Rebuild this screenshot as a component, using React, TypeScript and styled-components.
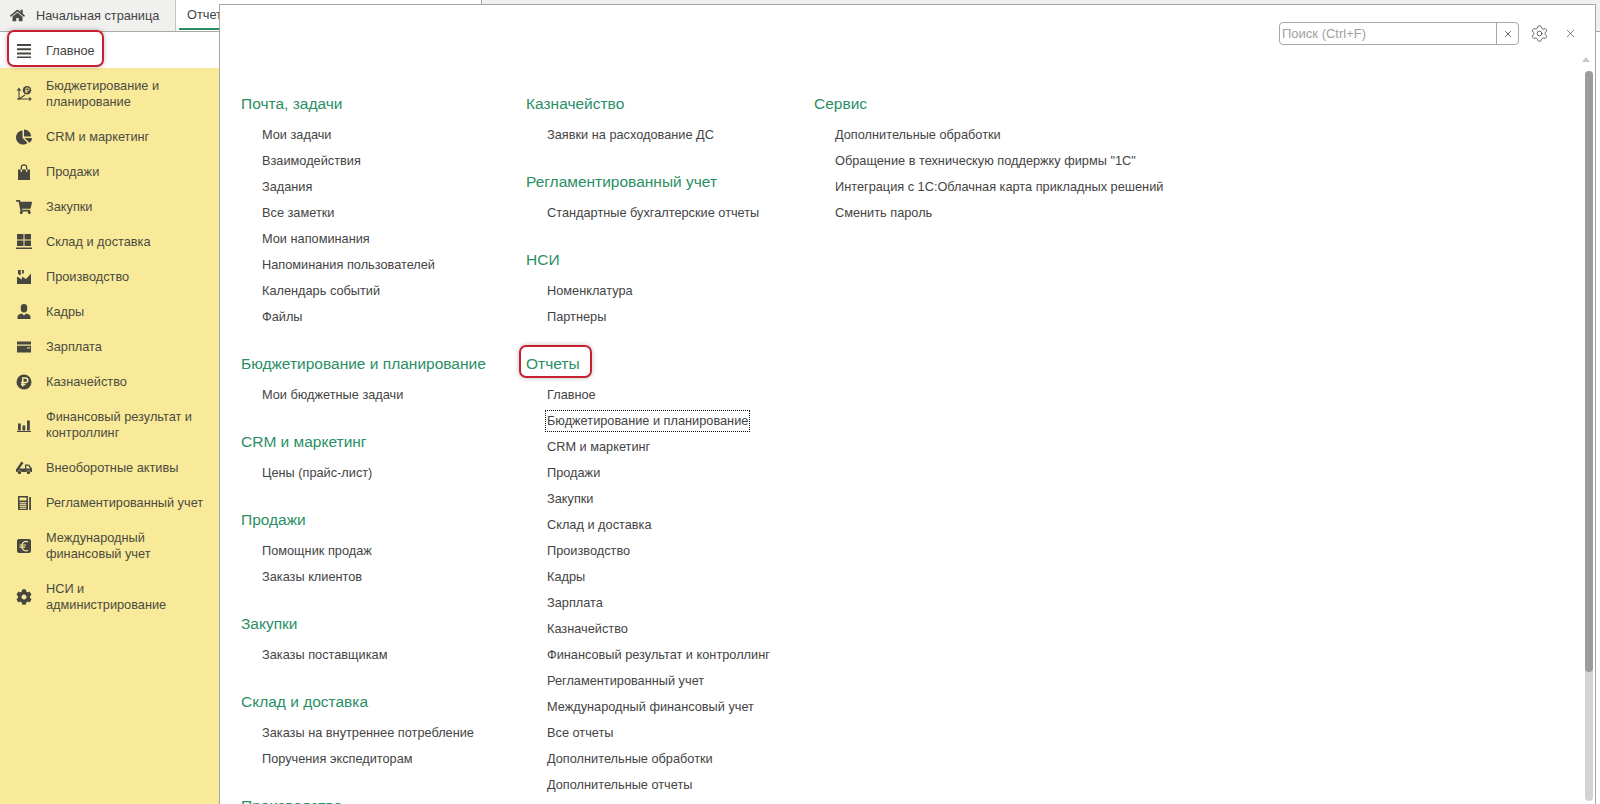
import React from 'react';
import styled, { createGlobalStyle } from 'styled-components';
import { Settings, X } from 'lucide-react';
import { FaChartPie, FaCog, FaHome, FaShoppingCart } from 'react-icons/fa';

const GlobalStyle = createGlobalStyle`
  html, body {
    margin: 0;
    height: 100%;
    overflow: hidden;
    background: #fff;
  }
  body {
    font-family: "Liberation Sans", Arial, sans-serif;
    font-size: 12.75px;
  }
`;

const Page = styled.div`
  position: relative;
  display: flex;
  flex-direction: column;
  height: 100vh;
  overflow: hidden;
`;

const TopBar = styled.div`
  display: flex;
  height: 31px;
  flex: none;
  border-bottom: 1px solid #a9a9a5;
  background: #f0f0ee;
`;

const HomeTab = styled.div`
  display: flex;
  align-items: center;
  gap: 11px;
  width: 176px;
  padding-left: 10px;
  box-sizing: border-box;
  border-right: 1px solid #c4c4c0;
  color: #444;
  svg {
    width: 15px;
    height: 15px;
    color: #4a4a46;
  }
`;

const ReportTab = styled.div`
  position: relative;
  width: 306px;
  box-sizing: border-box;
  padding: 7px 0 0 11px;
  border-right: 1px solid #a9a9a5;
  background: #fff;
  color: #444;
  &::after {
    content: '';
    position: absolute;
    left: 3px;
    bottom: 1px;
    width: 80px;
    height: 2px;
    background: #2a8f65;
  }
`;

const Body = styled.div`
  display: flex;
  flex: 1;
  min-height: 0;
`;

const Sidebar = styled.nav`
  display: flex;
  flex-direction: column;
  width: 219px;
  flex: none;
`;

const MainRow = styled.div`
  position: relative;
  display: flex;
  align-items: center;
  height: 36px;
  flex: none;
  padding-left: 16px;
  gap: 14px;
  color: #444;
  background: #fff;
`;

const Highlight = styled.span`
  position: absolute;
  left: 7px;
  top: -2px;
  width: 97px;
  height: 37px;
  box-sizing: border-box;
  border: 2px solid #c9202f;
  border-radius: 7px;
  box-shadow: 0 0 5px rgba(0, 0, 0, 0.28);
`;

const NavList = styled.div`
  flex: 1;
  padding-top: 1px;
  background: #f9ea9a;
`;

const NavRow = styled.div`
  display: flex;
  align-items: center;
  gap: 14px;
  padding: 9px 0 10px 16px;
  line-height: 16px;
  color: #4a4a3e;
`;

const NavIcon = styled.span`
  display: flex;
  align-items: center;
  justify-content: center;
  width: 16px;
  height: 16px;
  flex: none;
  color: #47473f;
  svg {
    display: block;
    width: 16px;
    height: 16px;
  }
`;

const Panel = styled.section`
  position: absolute;
  left: 219px;
  top: 4px;
  right: 4px;
  bottom: -1px;
  box-sizing: border-box;
  border: 1px solid #a6a6a2;
  background: #fff;
  overflow: hidden;
`;

const PanelHead = styled.header`
  display: flex;
  align-items: center;
  justify-content: flex-end;
  height: 23px;
  margin: 17px 0 49px;
  padding-right: 18px;
`;

const SearchBox = styled.div`
  display: flex;
  width: 240px;
  height: 23px;
  box-sizing: border-box;
  border: 1px solid #a8a8a8;
  border-radius: 4px;
`;

const SearchInput = styled.input`
  flex: 1;
  min-width: 0;
  border: 0;
  outline: 0;
  padding: 0 2px;
  background: transparent;
  font: 13px "Liberation Sans", Arial, sans-serif;
  color: #444;
  &::placeholder {
    color: #a0a0a0;
    opacity: 1;
  }
`;

const SearchClear = styled.span`
  display: flex;
  align-items: center;
  justify-content: center;
  width: 21px;
  border-left: 1px solid #a8a8a8;
  color: #444;
`;

const HeadButton = styled.span<{ $gap: number }>`
  display: flex;
  align-items: center;
  justify-content: center;
  color: #444;
  margin-left: ${({ $gap }) => $gap}px;
`;

const Columns = styled.div`
  display: grid;
  grid-template-columns: 285px 288px 1fr;
  padding-left: 21px;
`;

const Column = styled.div`
  display: flex;
  flex-direction: column;
  gap: 24px;
`;

const Group = styled.div``;

const GroupTitle = styled.h3<{ $marked?: boolean }>`
  position: relative;
  margin: 0 0 8px;
  font-size: 15.5px;
  font-weight: 400;
  line-height: 20px;
  color: #2a8f65;
  ${({ $marked }) =>
    $marked &&
    `&::after {
      content: '';
      position: absolute;
      left: -7px;
      top: -9px;
      width: 73px;
      height: 33px;
      box-sizing: border-box;
      border: 2px solid #c9202f;
      border-radius: 7px;
      box-shadow: 0 0 5px rgba(0, 0, 0, 0.25);
    }`}
`;

const Item = styled.div`
  display: flex;
  align-items: center;
  height: 26px;
  padding-left: 21px;
  color: #444;
`;

const ItemLabel = styled.span<{ $focused?: boolean }>`
  line-height: 18px;
  white-space: nowrap;
  ${({ $focused }) => $focused && 'outline: 1px dotted #111; outline-offset: 1px;'}
`;

const ScrollArrow = styled.span`
  position: absolute;
  right: 5px;
  top: 52px;
  width: 0;
  height: 0;
  border: 4px solid transparent;
  border-top: 0;
  border-bottom: 5px solid #c9c9c9;
`;

const ScrollTrack = styled.div`
  position: absolute;
  right: 2px;
  top: 66px;
  bottom: 3px;
  width: 8px;
  border-radius: 4px;
  background: #d3d3d3;
`;

const ScrollThumb = styled.div`
  height: 601px;
  border-radius: 4px;
  background: #9c9c9c;
`;

const Budget = () => (
  <svg viewBox="0 0 16 16">
    <path d="M3 3v11M1 13h14M1.400 4.600 3 2.400l1.600 2.200M13.200 11.400 15 13l-1.800 1.600M3 13l6-4" fill="none" stroke="currentColor" strokeWidth="1.100" />
    <circle cx="11" cy="4.200" r="4.200" fill="currentColor" />
    <path d="M10 7V2h1.800a1.300 1.300 0 0 1 0 2.800H9.200M9.200 6h2.600" fill="none" stroke="#f9ea9a" strokeWidth="0.900" />
  </svg>
);

const Bag = () => (
  <svg viewBox="0 0 16 16">
    <path d="M2 5.500h12V16H2z" fill="currentColor" />
    <path d="M5.300 8V3.500a2.700 2.700 0 0 1 5.400 0V8" fill="none" stroke="currentColor" strokeWidth="1.300" />
    <path d="M5.300 5.500V8M10.700 5.500V8" stroke="#f9ea9a" strokeWidth="1.300" />
  </svg>
);

const Warehouse = () => (
  <svg viewBox="0 0 16 16" fill="currentColor">
    <path d="M1 0h6.500v5.500H1zM8.500 0H15v5.500H8.500zM1 6.500h6.500V12H1zM8.500 6.500H15V12H8.500zM0 13.500h16V15H0z" />
  </svg>
);

const Factory = () => (
  <svg viewBox="0 0 16 16" fill="currentColor">
    <path d="M1 15V7.500l5 3V7.500l4 2.500 5-5.500V15zM2 1h2.800v5.500L2 5zM6 1h1.800v3.500H6z" />
  </svg>
);

const Person = () => (
  <svg viewBox="0 0 16 16" fill="currentColor">
    <path d="M4.800 3.200a3.200 3.200 0 0 1 6.400 0v2a3.200 3.200 0 0 1-6.400 0zM1.500 15v-2c0-2.200 2.300-3 4.500-3.500L8 11.500l2-2c2.200.5 4.500 1.300 4.500 3.500v2z" />
  </svg>
);

const Card = () => (
  <svg viewBox="0 0 16 16" fill="currentColor">
    <path d="M1 2.500h14v3H1zM1 6.800h14v6.700H1z" />
    <path d="M11 8.500h3v1h-3z" fill="#f9ea9a" />
  </svg>
);

const Ruble = () => (
  <svg viewBox="0 0 16 16">
    <circle cx="8" cy="8" r="7.500" fill="currentColor" />
    <path d="M6.800 12.500V4h2.700a2.300 2.300 0 0 1 0 4.600H5M5 10.500h4.500" fill="none" stroke="#f9ea9a" strokeWidth="1.500" />
  </svg>
);

const Bars = () => (
  <svg viewBox="0 0 16 16" fill="currentColor">
    <path d="M2 6.500h2.800v7H2zM6.500 8.500h2.800v5H6.500zM11 3.500h2.800v10H11zM1 14h14v1H1z" />
  </svg>
);

const Truck = () => (
  <svg viewBox="0 0 16 16" fill="currentColor">
    <path d="M0 9.500 5.500 1.500l2 1.400L3.500 8.500h5.500V4.500h4l3 4V12h-1.300a2.400 2.400 0 0 0-4.400 0H5.700a2.400 2.400 0 0 0-4.400 0H0zM10.300 5.800v2.700h3.800l-1.800-2.700z" fillRule="evenodd" />
    <circle cx="3.500" cy="12.500" r="1.700" />
    <circle cx="12.500" cy="12.500" r="1.700" />
  </svg>
);

const Calculator = () => (
  <svg viewBox="0 0 16 16">
    <path d="M2 1h10v14H2z" fill="currentColor" />
    <path d="M3.500 2.500h7v3h-7z" fill="#f9ea9a" />
    <path d="M3.500 7.500h7M3.500 9.500h7M3.500 11.500h7M3.500 13.500h7M5 7v7M7 7v7M9 7v7" stroke="#f9ea9a" strokeWidth="0.700" fill="none" />
    <path d="M13.200 2H15v13h-1.800z" fill="currentColor" />
  </svg>
);

const Euro = () => (
  <svg viewBox="0 0 16 16">
    <rect x="1" y="1" width="14" height="14" rx="2" fill="currentColor" />
    <path d="M12 4a4 4 0 0 0-6 3.800V8.500A4 4 0 0 0 12 12.200M3.500 7h6.500M3.500 9.200h5.500" fill="none" stroke="#f9ea9a" strokeWidth="1.200" />
  </svg>
);

const MenuBars = () => (
  <svg viewBox="0 0 16 16" fill="currentColor">
    <path d="M1 2h14v2H1zM1 6.300h14v2H1zM1 10.500h14v2H1zM1 14.500h14v2H1z" />
  </svg>
);

const navItems: { icon: React.ReactNode; label: React.ReactNode }[] = [
  { icon: <Budget />, label: <>Бюджетирование и<br />планирование</> },
  { icon: <FaChartPie />, label: 'CRM и маркетинг' },
  { icon: <Bag />, label: 'Продажи' },
  { icon: <FaShoppingCart />, label: 'Закупки' },
  { icon: <Warehouse />, label: 'Склад и доставка' },
  { icon: <Factory />, label: 'Производство' },
  { icon: <Person />, label: 'Кадры' },
  { icon: <Card />, label: 'Зарплата' },
  { icon: <Ruble />, label: 'Казначейство' },
  { icon: <Bars />, label: <>Финансовый результат и<br />контроллинг</> },
  { icon: <Truck />, label: 'Внеоборотные активы' },
  { icon: <Calculator />, label: 'Регламентированный учет' },
  { icon: <Euro />, label: <>Международный<br />финансовый учет</> },
  { icon: <FaCog />, label: <>НСИ и<br />администрирование</> },
];

interface IGroup {
  title: string;
  items: string[];
}

const columns: IGroup[][] = [
  [
    {
      title: 'Почта, задачи',
      items: ['Мои задачи', 'Взаимодействия', 'Задания', 'Все заметки', 'Мои напоминания', 'Напоминания пользователей', 'Календарь событий', 'Файлы'],
    },
    { title: 'Бюджетирование и планирование', items: ['Мои бюджетные задачи'] },
    { title: 'CRM и маркетинг', items: ['Цены (прайс-лист)'] },
    { title: 'Продажи', items: ['Помощник продаж', 'Заказы клиентов'] },
    { title: 'Закупки', items: ['Заказы поставщикам'] },
    { title: 'Склад и доставка', items: ['Заказы на внутреннее потребление', 'Поручения экспедиторам'] },
    { title: 'Производство', items: [] },
  ],
  [
    { title: 'Казначейство', items: ['Заявки на расходование ДС'] },
    { title: 'Регламентированный учет', items: ['Стандартные бухгалтерские отчеты'] },
    { title: 'НСИ', items: ['Номенклатура', 'Партнеры'] },
    {
      title: 'Отчеты',
      items: [
        'Главное',
        'Бюджетирование и планирование',
        'CRM и маркетинг',
        'Продажи',
        'Закупки',
        'Склад и доставка',
        'Производство',
        'Кадры',
        'Зарплата',
        'Казначейство',
        'Финансовый результат и контроллинг',
        'Регламентированный учет',
        'Международный финансовый учет',
        'Все отчеты',
        'Дополнительные обработки',
        'Дополнительные отчеты',
      ],
    },
  ],
  [
    {
      title: 'Сервис',
      items: ['Дополнительные обработки', 'Обращение в техническую поддержку фирмы "1С"', 'Интеграция с 1С:Облачная карта прикладных решений', 'Сменить пароль'],
    },
  ],
];

export default function App(): JSX.Element {
  return (
    <Page>
      <GlobalStyle />
      <TopBar>
        <HomeTab>
          <FaHome />
          Начальная страница
        </HomeTab>
        <ReportTab>Отчеты</ReportTab>
      </TopBar>
      <Body>
        <Sidebar>
          <MainRow>
            <NavIcon>
              <MenuBars />
            </NavIcon>
            Главное
            <Highlight />
          </MainRow>
          <NavList>
            {navItems.map((item, i) => (
              <NavRow key={i}>
                <NavIcon>{item.icon}</NavIcon>
                <span>{item.label}</span>
              </NavRow>
            ))}
          </NavList>
        </Sidebar>
      </Body>
      <Panel>
        <PanelHead>
          <SearchBox>
            <SearchInput placeholder="Поиск (Ctrl+F)" readOnly />
            <SearchClear>
              <X size={10} strokeWidth={2} />
            </SearchClear>
          </SearchBox>
          <HeadButton $gap={11}>
            <Settings size={19} strokeWidth={1} />
          </HeadButton>
          <HeadButton $gap={15}>
            <X size={13} strokeWidth={1.200} />
          </HeadButton>
        </PanelHead>
        <Columns>
          {columns.map((groups, c) => (
            <Column key={c}>
              {groups.map((group) => (
                <Group key={group.title}>
                  <GroupTitle $marked={group.title === 'Отчеты'}>{group.title}</GroupTitle>
                  {group.items.map((item) => (
                    <Item key={item}>
                      <ItemLabel $focused={group.title === 'Отчеты' && item === 'Бюджетирование и планирование'}>{item}</ItemLabel>
                    </Item>
                  ))}
                </Group>
              ))}
            </Column>
          ))}
        </Columns>
        <ScrollArrow />
        <ScrollTrack>
          <ScrollThumb />
        </ScrollTrack>
      </Panel>
    </Page>
  );
}
